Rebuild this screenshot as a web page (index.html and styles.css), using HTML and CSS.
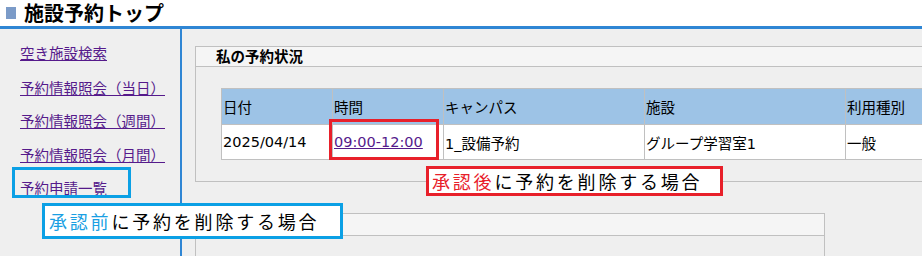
FILE: index.html
```html
<!DOCTYPE html>
<html lang="ja">
<head>
  <meta charset="UTF-8">
  <title>施設予約トップ</title>
  <link rel="stylesheet" href="styles.css">
</head>
<body>

  <div class="page-header">
    <span class="title-mark"></span>
    <h1>施設予約トップ</h1>
  </div>

  <div class="layout">
    <!-- Side menu -->
    <ul class="side-menu">
      <li><a href="#">空き施設検索</a></li>
      <li><a href="#">予約情報照会（当日）</a></li>
      <li><a href="#">予約情報照会（週間）</a></li>
      <li><a href="#">予約情報照会（月間）</a></li>
      <li><a href="#">予約申請一覧</a></li>
    </ul>

    <div class="main">
      <div class="panel panel-status">
        <div class="panel-head">私の予約状況</div>
        <div class="panel-body">
          <table class="reserve-table">
            <tr>
              <th class="col-date">日付</th>
              <th class="col-time">時間</th>
              <th class="col-campus">キャンパス</th>
              <th class="col-room">施設</th>
              <th>利用種別</th>
            </tr>
            <tr>
              <td>2025/04/14</td>
              <td><a href="#">09:00-12:00</a></td>
              <td>1_設備予約</td>
              <td>グループ学習室1</td>
              <td>一般</td>
            </tr>
          </table>
        </div>
      </div>

      <div class="panel panel-second">
        <div class="panel-head"></div>
      </div>
    </div>
  </div>

  <!-- Annotations -->
  <div class="mark mark-blue mark-menu"></div>
  <div class="mark mark-red mark-time"></div>
  <div class="callout callout-blue"><span class="hl">承認前</span>に予約を削除する場合</div>
  <div class="callout callout-red"><span class="hl">承認後</span>に予約を削除する場合</div>

</body>
</html>
```

FILE: styles.css
```css
/* General Styles */
* {
  box-sizing: border-box;
  margin: 0;
  padding: 0;
}

body {
  font-family: "DejaVu Sans", "Noto Sans CJK JP", sans-serif;
  font-size: 14.5px;
  background-color: #efefef;
  color: #000;
  overflow: hidden;
}

a {
  color: #551a8b;
}

/* Header */
.page-header {
  display: flex;
  align-items: center;
  height: 29px;
  background-color: #fff;
  border-bottom: 3px solid #2f86d4;
  padding-left: 6px;
}

.title-mark {
  width: 10px;
  height: 12px;
  background-color: #7b9bc8;
  margin-right: 8px;
}

.page-header h1 {
  font-family: "Noto Sans CJK JP", sans-serif;
  font-size: 20px;
  font-weight: bold;
  line-height: 26px;
}

/* Layout */
.layout {
  display: flex;
  height: calc(100vh - 29px);
}

.side-menu {
  list-style: none;
  width: 182px;
  flex-shrink: 0;
  border-right: 2px solid #2f86d4;
  padding: 14px 0 0 20px;
}

.side-menu li {
  line-height: 20px;
  margin-bottom: 12.3px;
}

.side-menu li:first-child {
  margin-bottom: 14px;
}

.side-menu a {
  font-family: "Noto Sans CJK JP", sans-serif;
}

.main {
  flex: 1;
  min-width: 0;
  overflow: hidden;
  padding: 17px 0 0 13px;
}

/* Panels */
.panel {
  border: 1px solid #c0c0c0;
}

.panel-head {
  height: 20px;
  background-color: #f5f5f5;
  border-bottom: 1px solid #c0c0c0;
  padding-left: 20px;
  font-family: "Noto Sans CJK JP", sans-serif;
  font-weight: bold;
  line-height: 18px;
}

.panel-status {
  width: 860px;
}

.panel-body {
  padding: 21px 0 21px 25px;
}

.panel-second {
  width: 630px;
  height: 60px;
  margin-top: 31px;
  border-bottom: none;
}

.panel-second .panel-head {
  height: 22px;
}

/* Reservation table */
.reserve-table {
  border-collapse: collapse;
  width: 780px;
  background-color: #fff;
}

.reserve-table th,
.reserve-table td {
  border: 1px solid #c0c0c0;
  text-align: left;
  font-weight: normal;
  padding: 0 1px;
  white-space: nowrap;
}

.reserve-table th {
  height: 36px;
  background-color: #9dc3e6;
}

.reserve-table td {
  height: 35px;
}

.col-date,
.col-time {
  width: 111px;
}

.col-campus,
.col-room {
  width: 201px;
}

/* Annotations */
.mark {
  position: absolute;
  border: 3px solid;
}

.mark-blue {
  border-color: #0ba0e5;
}

.mark-red {
  border-color: #e8202a;
}

.mark-menu {
  left: 12px;
  top: 167px;
  width: 119px;
  height: 31px;
}

.mark-time {
  left: 329px;
  top: 119px;
  width: 110px;
  height: 41px;
}

.callout {
  position: absolute;
  background-color: #fff;
  border: 3px solid;
  font-family: "Noto Sans CJK JP", sans-serif;
  font-size: 18px;
  letter-spacing: 2.8px;
  white-space: nowrap;
  padding-left: 4px;
}

.callout-blue {
  left: 42px;
  top: 203px;
  width: 301px;
  height: 36px;
  line-height: 30px;
  border-color: #0ba0e5;
}

.callout-blue .hl {
  color: #1a9fe3;
}

.callout-red {
  left: 426px;
  top: 166px;
  width: 297px;
  height: 30px;
  line-height: 24px;
  padding-left: 3px;
  border-color: #e8202a;
}

.callout-red .hl {
  color: #e8202a;
}
```
